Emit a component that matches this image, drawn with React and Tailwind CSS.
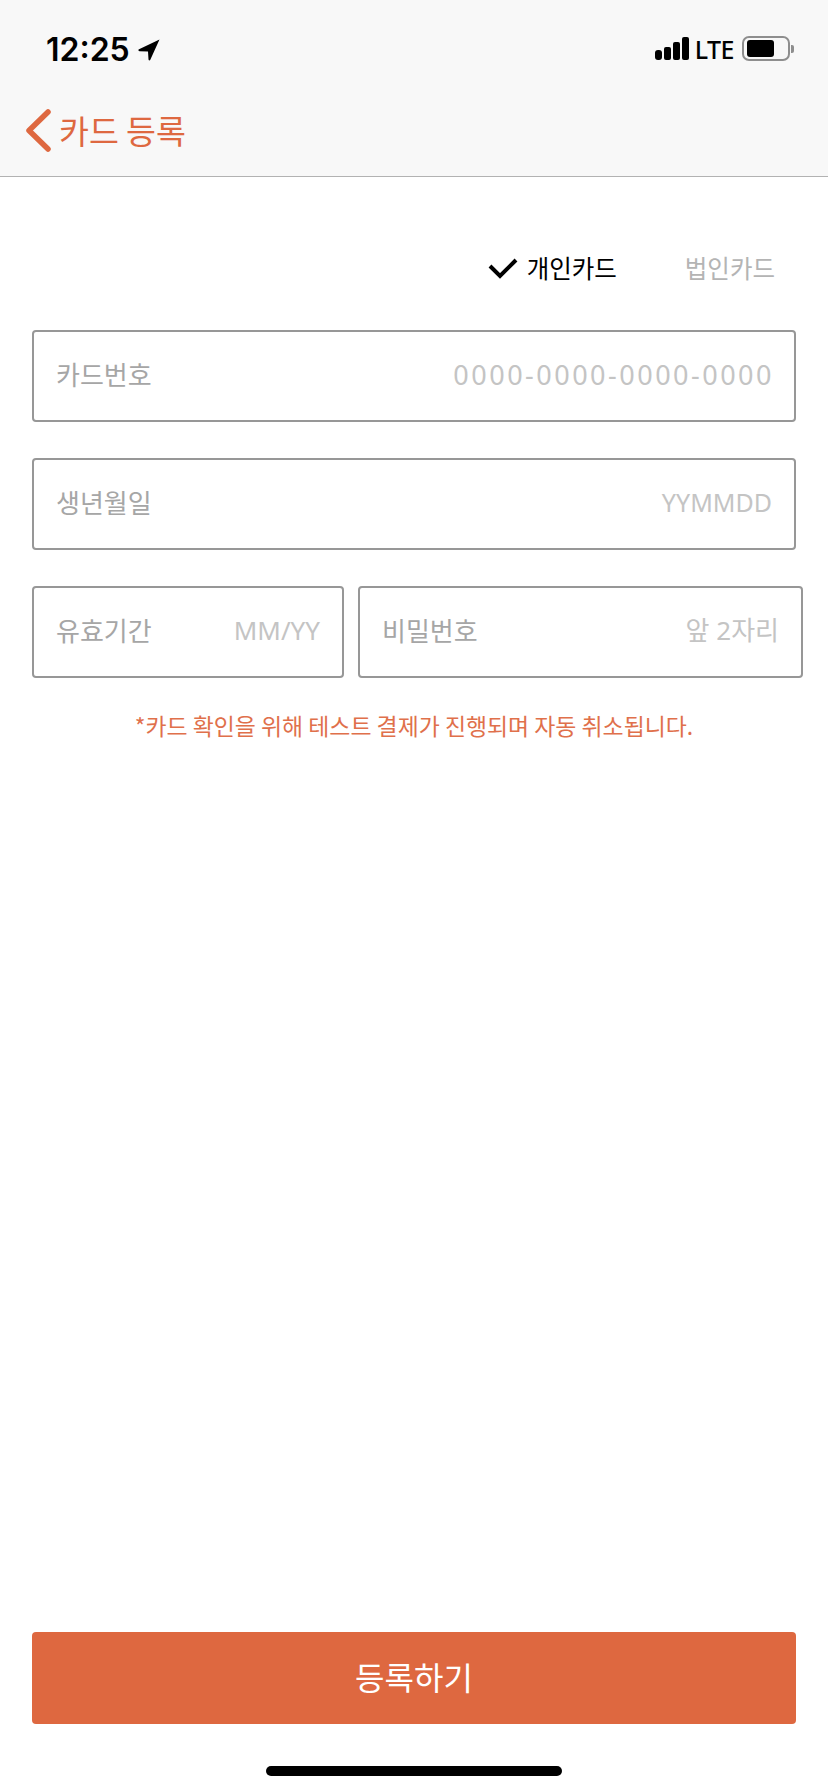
import React from 'react';

const FONT = "font-['Noto_Sans_CJK_KR','Noto_Sans',sans-serif]";

function Field({ label, hint, hintClass = '', className = '' }) {
  return (
    <div className={`flex h-[92px] items-center justify-between rounded-[4px] border-2 border-[#979797] pb-[3px] pl-[22px] pr-[22px] ${className}`}>
      <span className="text-[26px] leading-none text-[#a6a6a6]">{label}</span>
      <span className={`leading-none text-[#c4c4c4] font-['Noto_Sans','Noto_Sans_CJK_KR',sans-serif] ${hintClass}`}>{hint}</span>
    </div>
  );
}

function StatusBar() {
  return (
    <div className="flex h-[88px] items-end justify-between pb-[23px] pl-[46px] pr-[34px]">
      <div className="flex items-center gap-[8px]">
        <span className="text-[32px] leading-[30px] font-semibold text-black font-['Inter',sans-serif]">12:25</span>
        <svg width="22" height="22" viewBox="0 0 22 22">
          <path d="M21.5 0.5 L0.5 10.5 Q0 12 1.5 12.2 L10 12.5 L10.5 20.5 Q11 22 12.2 21 Z" fill="#000" />
        </svg>
      </div>
      <div className="mb-[4px] flex items-center">
        <div className="flex items-end gap-[2px]">
          <div className="h-[10px] w-[7px] rounded-[3px] bg-black" />
          <div className="h-[13px] w-[7px] rounded-[2px] bg-black" />
          <div className="h-[18px] w-[7px] rounded-[2px] bg-black" />
          <div className="h-[23px] w-[7px] rounded-[2px] bg-black" />
        </div>
        <span className="ml-[6px] text-[25px] leading-[24px] font-medium tracking-[-0.5px] text-black font-['Noto_Sans',sans-serif]">LTE</span>
        <div className="ml-[8px] flex items-center">
          <div className="flex h-[25px] w-[48px] items-center rounded-[7px] border-2 border-[#8e8e8e] pl-[3px]">
            <div className="h-[17px] w-[27px] rounded-[3px] bg-black" />
          </div>
          <div className="ml-[1px] h-[8px] w-[3px] rounded-r-[2px] bg-[#8e8e8e]" />
        </div>
      </div>
    </div>
  );
}

export default function App() {
  return (
    <div className={`flex h-[1792px] w-[828px] flex-col overflow-hidden bg-white ${FONT}`}>
      <header className="h-[177px] border-b border-[#b2b2b2] bg-[#f8f8f8]">
        <StatusBar />
        <div className="flex items-center pl-[26px] pt-[21px]">
          <svg width="25" height="43" viewBox="0 0 25 43" fill="none">
            <path d="M22 3 L3 21.5 L22 40" stroke="#de6840" strokeWidth="5.5" strokeLinecap="round" strokeLinejoin="round" />
          </svg>
          <span className="ml-[8px] text-[32.5px] leading-none text-[#de6840]">카드 등록</span>
        </div>
      </header>

      <main className="flex flex-1 flex-col pl-[32px] pr-[32px]">
        <div className="mt-[79px] flex items-center justify-end pr-[21px]">
          <svg width="30" height="22" viewBox="0 0 30 22" fill="none">
            <path d="M2 9 L12 19 L28 3" stroke="#000" strokeWidth="4" />
          </svg>
          <span className="ml-[9px] text-[24.5px] leading-none text-black">개인카드</span>
          <span className="ml-[68px] text-[24.5px] leading-none text-[#b4b4b4]">법인카드</span>
        </div>

        <Field className="mt-[49px]" label="카드번호" hint="0000-0000-0000-0000" hintClass="-mr-[2px] text-[27px] tracking-[2.5px]" />
        <Field className="mt-[36px]" label="생년월일" hint="YYMMDD" hintClass="text-[25px]" />

        <div className="mt-[36px] flex gap-[14px]">
          <Field className="w-[312px] shrink-0" label="유효기간" hint="MM/YY" hintClass="text-[26px]" />
          <Field className="w-[445px] shrink-0" label="비밀번호" hint="앞 2자리" hintClass="text-[26px]" />
        </div>

        <p className="mt-[34px] text-center text-[22.9px] leading-[26px] text-[#e0704b]">*카드 확인을 위해 테스트 결제가 진행되며 자동 취소됩니다.</p>

        <button className="mt-auto flex h-[92px] items-center justify-center rounded-[4px] bg-[#de6840] pb-[5px] text-[32px] text-white">등록하기</button>

        <div className="mx-auto mb-[16px] mt-[42px] h-[10px] w-[296px] rounded-full bg-black" />
      </main>
    </div>
  );
}
